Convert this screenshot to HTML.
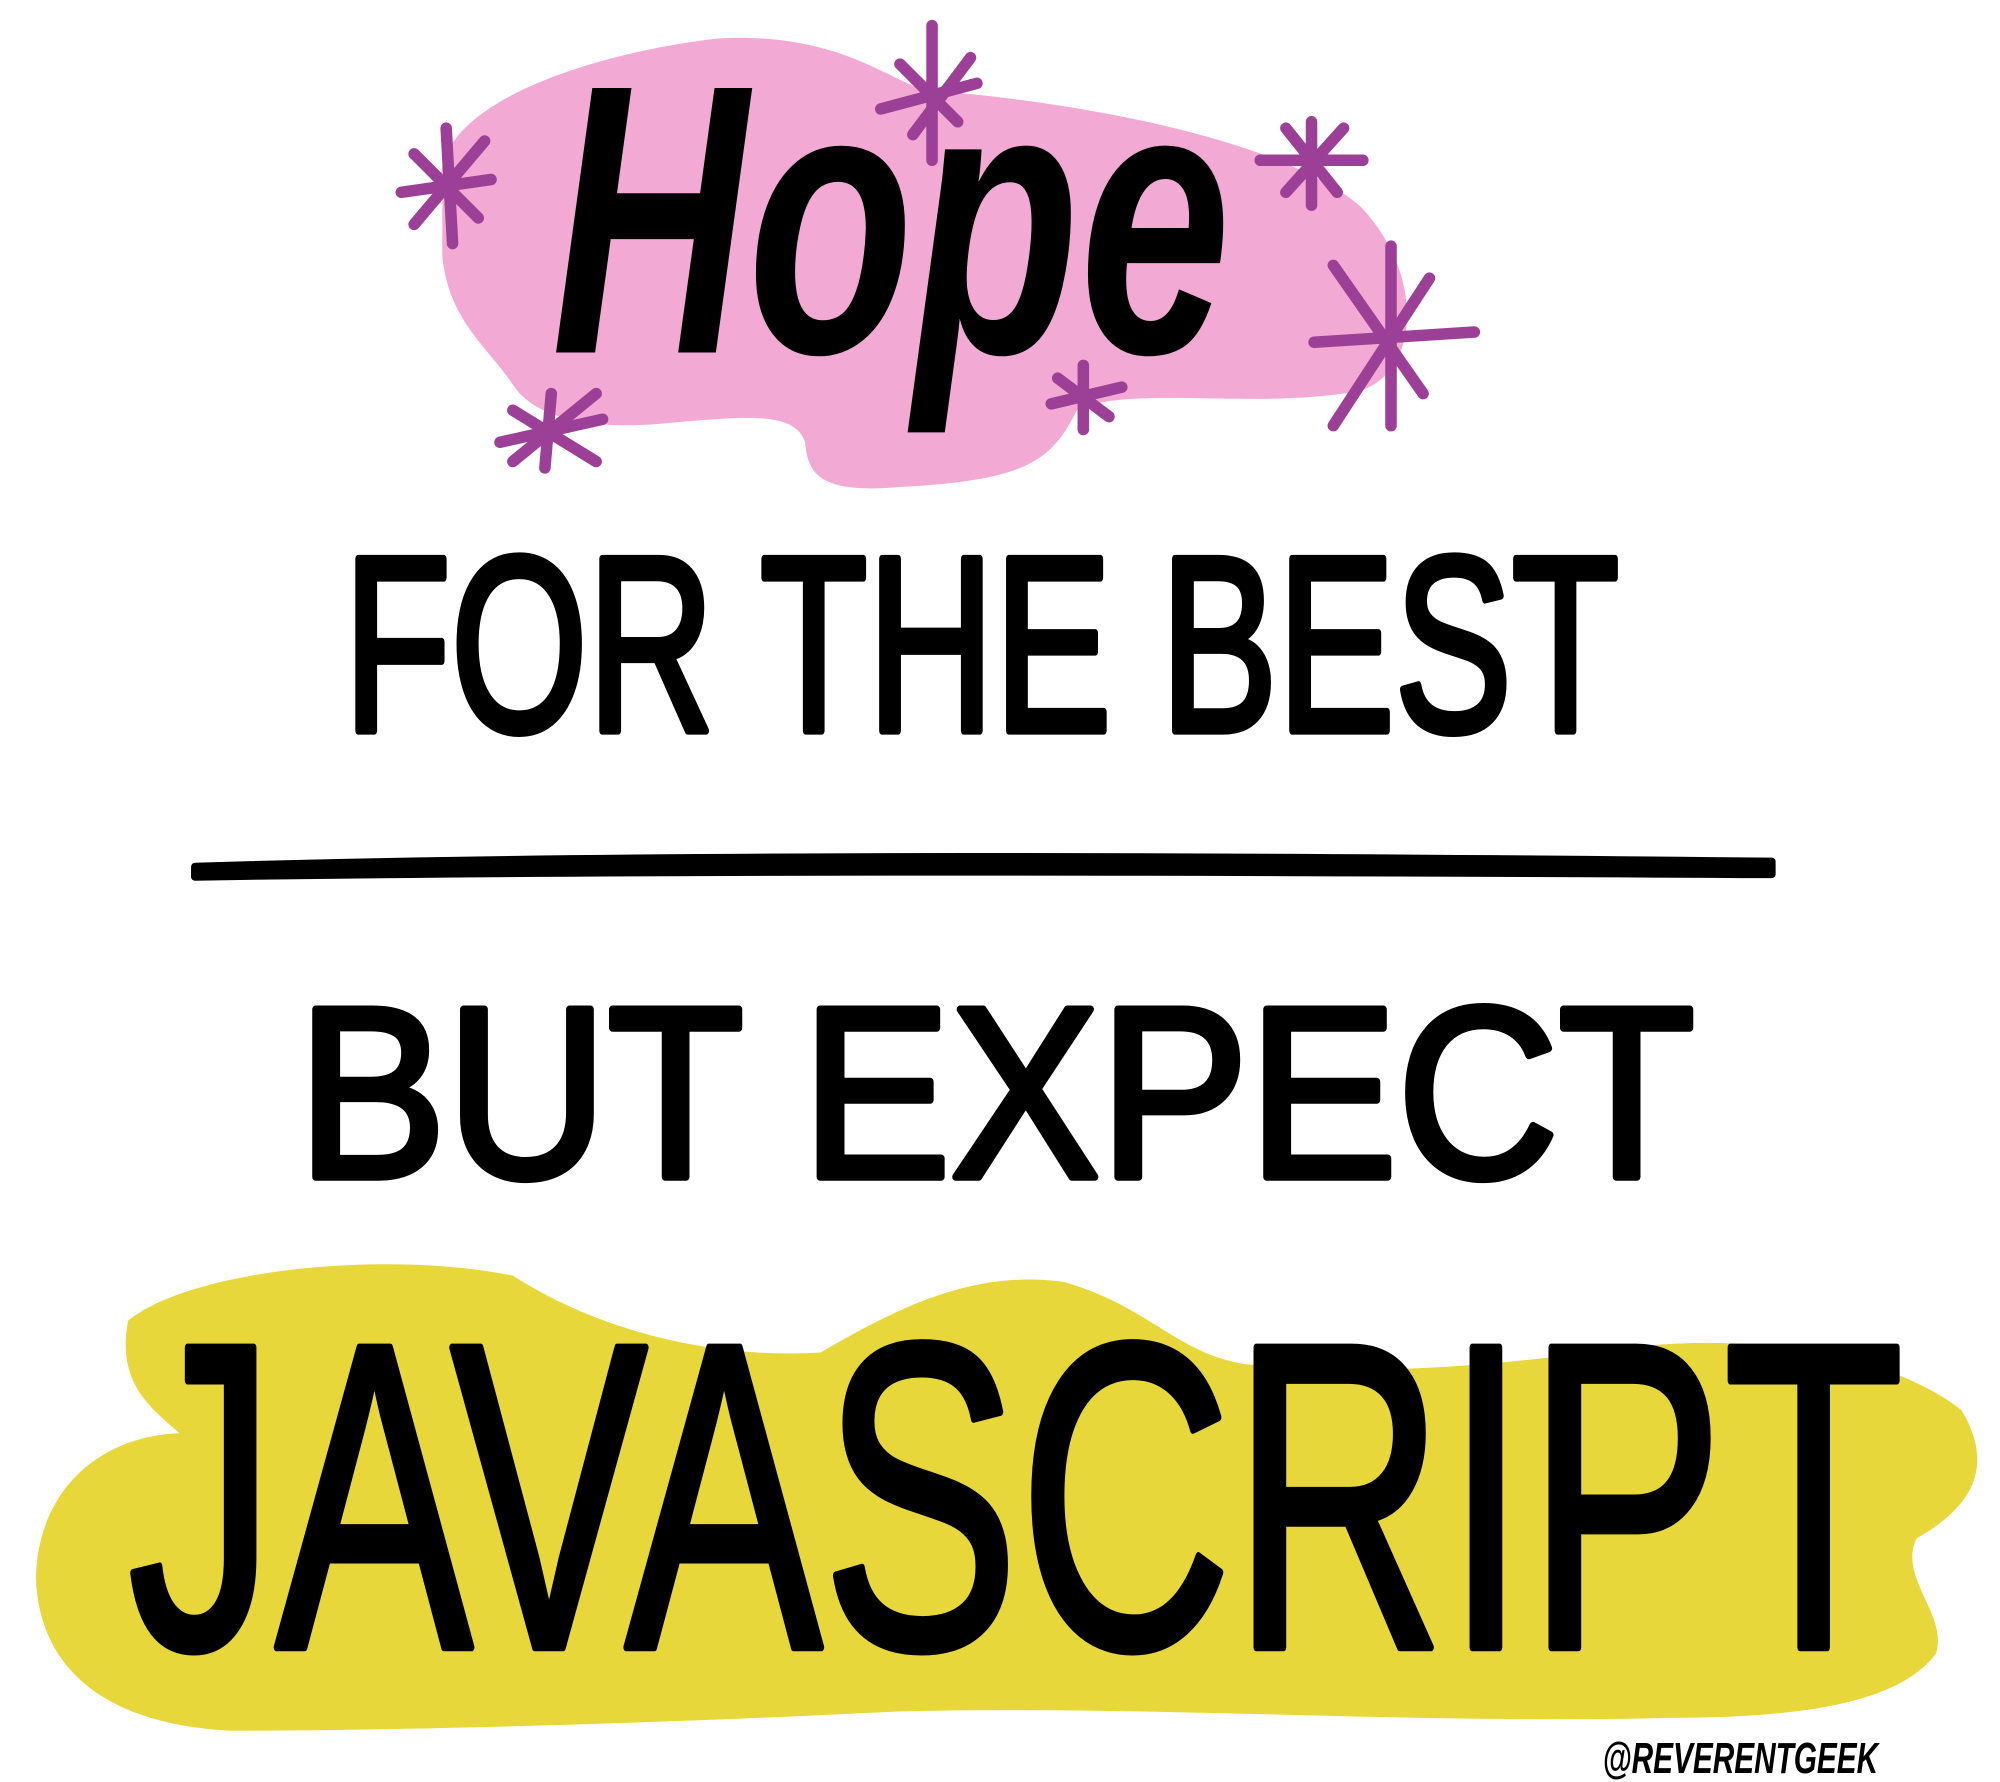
<!DOCTYPE html>
<html><head><style>html,body{margin:0;padding:0;background:#fff}svg{display:block}</style></head>
<body>
<svg width="2000" height="1782" viewBox="0 0 1560 1390" xmlns="http://www.w3.org/2000/svg">
<path d="M345 150 C330 80 470 40 560 30 C650 25 690 60 720 70 C850 80 1000 110 1060 160 C1110 210 1110 290 1060 305 C980 320 880 300 840 320 C820 360 800 375 700 380 C640 385 630 370 628 345 C620 320 580 325 520 330 C470 335 420 330 400 300 C380 270 350 250 345 200 Z" fill="#f2a9d3"/>
<path d="M100 1030 C150 990 300 975 400 995 C470 1040 560 1060 640 1055 C700 1020 760 990 830 1000 C900 1020 920 1060 980 1065 C1100 1075 1200 1060 1280 1050 C1380 1040 1480 1060 1530 1100 C1560 1150 1530 1180 1495 1200 C1480 1230 1520 1260 1510 1290 C1480 1330 1400 1340 1300 1340 C1100 1345 900 1330 700 1335 C500 1345 300 1350 180 1350 C80 1345 30 1300 28 1230 C30 1160 80 1120 140 1118 C120 1100 90 1080 100 1030 Z" fill="#e8d73a"/>
<g stroke="#9c3f96" stroke-width="9" stroke-linecap="round" fill="none">
<g transform="translate(348,145)"><line x1="0" y1="-45" x2="5" y2="45"/><line x1="-35" y1="5" x2="35" y2="-5"/><line x1="-25" y1="-25" x2="25" y2="25"/><line x1="30" y1="-35" x2="-25" y2="30"/></g>
<g transform="translate(727,75)"><line x1="0" y1="-55" x2="0" y2="50"/><line x1="-40" y1="10" x2="35" y2="-10"/><line x1="-25" y1="-25" x2="20" y2="20"/><line x1="30" y1="-30" x2="-15" y2="30"/></g>
<g transform="translate(1023,125)"><line x1="0" y1="-30" x2="0" y2="35"/><line x1="-40" y1="0" x2="40" y2="0"/><line x1="-20" y1="-25" x2="20" y2="25"/><line x1="25" y1="-25" x2="-20" y2="25"/></g>
<g transform="translate(1080,262)"><line x1="5" y1="-70" x2="5" y2="70"/><line x1="-55" y1="5" x2="70" y2="-3"/><line x1="-40" y1="-55" x2="30" y2="45"/><line x1="35" y1="-45" x2="-40" y2="70"/></g>
<g transform="translate(430,335)"><line x1="0" y1="-28" x2="-5" y2="30"/><line x1="-40" y1="10" x2="40" y2="-8"/><line x1="-30" y1="-15" x2="35" y2="25"/><line x1="35" y1="-28" x2="-30" y2="25"/></g>
<g transform="translate(845,310)"><line x1="0" y1="-25" x2="0" y2="25"/><line x1="-25" y1="5" x2="30" y2="-8"/><line x1="-20" y1="-15" x2="20" y2="15"/></g>
</g>
<g font-family="Liberation Sans, sans-serif" fill="#000">
<text x="430" y="275" font-size="300" font-weight="bold" font-style="italic" textLength="530" lengthAdjust="spacingAndGlyphs">Hope</text>
<g stroke="#000" stroke-width="6" stroke-linejoin="round">
<text x="268" y="570" font-size="195" textLength="995" lengthAdjust="spacingAndGlyphs">FOR THE BEST</text>
<text x="232" y="918" font-size="190" textLength="1090" lengthAdjust="spacingAndGlyphs">BUT EXPECT</text>
<text x="100" y="1285" font-size="340" textLength="1385" lengthAdjust="spacingAndGlyphs">JAVASCRIPT</text>
</g>
<text x="1250" y="1383" font-size="34" font-weight="bold" font-style="italic" textLength="215" lengthAdjust="spacingAndGlyphs">@REVERENTGEEK</text>
</g>
<path d="M152 676 C500 665 1000 668 1382 672 L1382 682 C1000 680 500 678 152 684 Z" fill="#000" stroke="#000" stroke-width="6" stroke-linejoin="round"/>
</svg>
</body></html>
